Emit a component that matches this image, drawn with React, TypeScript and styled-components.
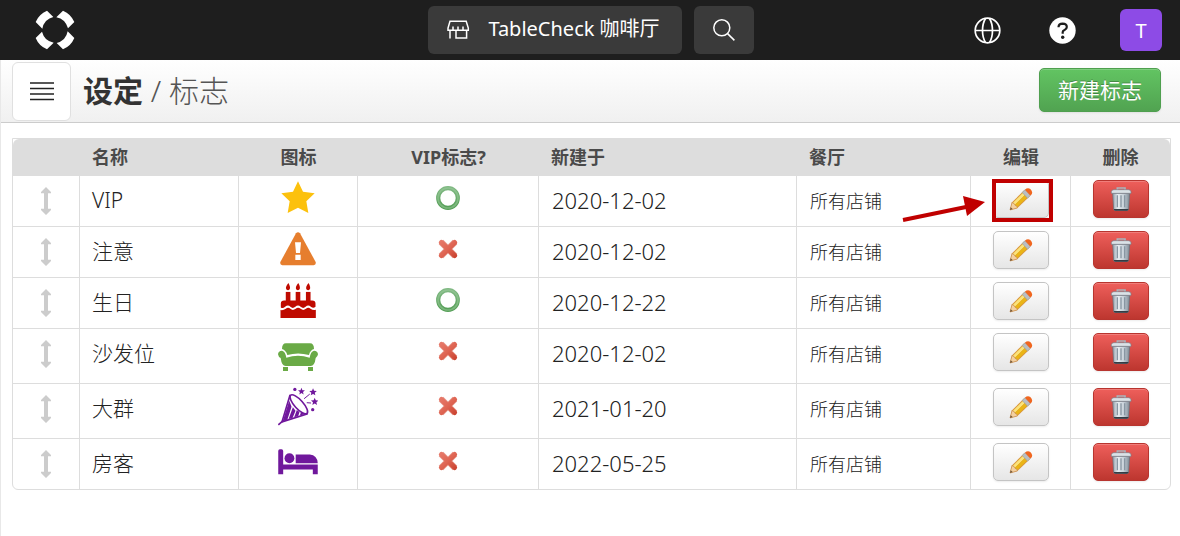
import React from 'react';
import styled, { createGlobalStyle, css } from 'styled-components';

const GlobalStyle = createGlobalStyle`
  *, *::before, *::after { box-sizing: border-box; }
  body {
    margin: 0;
    background: #fff;
    color: #222;
    font-family: "Noto Sans", "Noto Sans CJK SC", sans-serif;
    font-weight: 300;
  }
  button { font: inherit; color: inherit; cursor: pointer; margin: 0; }
  svg { display: block; flex: none; }
`;

const TopBar = styled.header`
  display: grid;
  grid-template-columns: 1fr auto 1fr;
  align-items: center;
  height: 60px;
  padding: 0 18px 0 20px;
  background: #1e1e1e;
  color: #fff;
`;

const LogoLink = styled.a`
  justify-self: start;
  margin-left: 15px;
`;

const BarGroup = styled.div`
  display: flex;
  gap: 12px;
`;

const BarButton = styled.button`
  display: flex;
  align-items: center;
  justify-content: center;
  gap: 18px;
  height: 48px;
  padding: 0 18px;
  border: 0;
  border-radius: 6px;
  background: #3a3a3a;
  color: #fff;
  font-size: 20px;
  font-weight: 400;
  line-height: 26px;
  white-space: nowrap;
`;

const ShopName = styled.span`
  padding: 0 4px 2px 0;
`;

const UserTools = styled.div`
  display: flex;
  align-items: center;
  justify-content: flex-end;
`;

const PlainButton = styled.button`
  display: flex;
  padding: 0;
  border: 0;
  background: none;
  margin-right: 48px;
  & + & { margin-right: 44px; }
`;

const Avatar = styled.button`
  width: 42px;
  height: 42px;
  padding: 0;
  border: 0;
  border-radius: 6px;
  background: #8d4be6;
  color: #fff;
  font-size: 20px;
  font-weight: 400;
`;

const PageBody = styled.div`
  border-left: 1px solid #e8e8e8;
  min-height: calc(100vh - 60px);
`;

const PageHeader = styled.div`
  display: flex;
  align-items: center;
  height: 63px;
  padding: 0 19px 0 11px;
  background: linear-gradient(#fff, #f0f0f0);
  border-bottom: 1px solid #ccc;
`;

const MenuButton = styled.button`
  display: flex;
  align-items: center;
  justify-content: center;
  width: 59px;
  height: 59px;
  padding: 0;
  border: 1px solid #e0e0e0;
  border-radius: 6px;
  background: #fff;
`;

const Title = styled.h1`
  flex: 1;
  margin: 0 0 0 12px;
  font-size: 30px;
  line-height: 44px;
  font-weight: 700;
  color: #333;
`;

const TitleSection = styled.span`
  font-weight: 300;
  color: #555;
`;

const CreateButton = styled.button`
  height: 44px;
  margin-bottom: 2px;
  padding: 0 18px;
  border: 1px solid #4f9f4f;
  border-radius: 5px;
  background: linear-gradient(#62c462, #51a351);
  box-shadow: inset 0 1px 0 rgba(255, 255, 255, 0.2), 0 1px 2px rgba(0, 0, 0, 0.08);
  color: #fff;
  font-size: 21px;
  font-weight: 400;
  line-height: 24px;
  text-shadow: 0 -1px 0 rgba(0, 0, 0, 0.25);
`;

const TableArea = styled.main`
  padding: 15px 9px 16px 11px;
`;

const FlagTable = styled.table`
  width: 100%;
  table-layout: fixed;
  border-collapse: separate;
  border-spacing: 0;
  border: 1px solid #ddd;
  border-radius: 0 0 6px 6px;
`;

const Col = styled.col<{ $w: number }>`
  width: ${(p) => p.$w}px;
`;

type Align = 'left' | 'center';

const HeadCell = styled.th<{ $align?: Align }>`
  height: 37px;
  padding: 0 12px 2px;
  background: #ddd;
  color: #4a4a4a;
  font-size: 18px;
  line-height: 24px;
  font-weight: 700;
  text-align: ${(p) => p.$align ?? 'center'};
  &:first-child { border-top-left-radius: 6px; }
  &:last-child { border-top-right-radius: 6px; }
`;

const Row = styled.tr<{ $tall?: boolean }>`
  height: ${(p) => (p.$tall ? 55 : 51)}px;
  &:last-child { height: 50px; }
`;

const Cell = styled.td`
  padding: 0 12px;
  border-right: 1px solid #ddd;
  border-bottom: 1px solid #ddd;
  vertical-align: top;
  font-size: 21px;
  line-height: 48px;
  &:last-child { border-right: 0; }
  ${Row}:last-child & { border-bottom: 0; }
`;

const DateCell = styled(Cell)`
  padding-left: 13px;
  font-size: 22px;
`;

const ShopCell = styled(Cell)`
  padding-left: 13px;
  font-size: 18px;
  line-height: 50px;
`;

const CenterBox = styled.div<{ $h: number }>`
  display: flex;
  align-items: center;
  justify-content: center;
  height: ${(p) => p.$h}px;
`;

const ActionCell = styled(Cell)`
  padding: 4px 0 0 22px;
`;

const ActionSlot = styled.div`
  position: relative;
  width: 56px;
  height: 38px;
`;

const Handle = styled.button`
  display: flex;
  padding: 0;
  border: 0;
  background: none;
  cursor: grab;
`;

const ActionButton = styled.button<{ $danger?: boolean }>`
  display: flex;
  align-items: center;
  justify-content: center;
  width: 56px;
  height: 38px;
  padding: 0;
  border-radius: 5px;
  ${(p) =>
    p.$danger
      ? css`
          border: 1px solid #b8352f;
          background: linear-gradient(#ee5f5b, #bd362f);
        `
      : css`
          border: 1px solid #c4c4c4;
          background: linear-gradient(#fff, #e6e6e6);
        `}
  box-shadow: inset 0 1px 0 rgba(255, 255, 255, 0.2), 0 1px 2px rgba(0, 0, 0, 0.08);
`;

const Highlight = styled.span`
  position: absolute;
  inset: -1px -4px -4px -1px;
  border: 4px solid #c00000;
  pointer-events: none;
`;

const Pointer = styled.svg`
  position: absolute;
  right: calc(100% + 7px);
  top: 15px;
  pointer-events: none;
`;

const Logo = () => (
  <svg width="40" height="40" viewBox="106 31 120 120" role="img" aria-label="TableCheck">
    <g fill="#fff">
      {[0, 90, 180, 270].map((a) => (
        <path key={a} transform={`rotate(${a} 166 91)`} d="M190 33 Q214 43 224 67 L205 86 Q202 74 193 64 Q183 55 170 53 Z" />
      ))}
    </g>
  </svg>
);

const ShopIcon = () => (
  <svg width="24" height="22" viewBox="0 0 24 22" fill="none" stroke="#fff" strokeWidth="1.5">
    <path d="M4 2.2H20.2L22.3 9V11.3H2V9Z" />
    <path d="M7 7.5V11M12 7.5V11M17 7.5V11M4 11.5V19.6M10 12V18.9H20.6V11.5" />
  </svg>
);

const SearchIcon = () => (
  <svg width="24" height="24" viewBox="0 0 24 24" fill="none" stroke="#fff" strokeWidth="1.5">
    <circle cx="9.8" cy="9.8" r="8" />
    <path d="M15.6 15.6L22.4 22.4" />
  </svg>
);

const GlobeIcon = () => (
  <svg width="27" height="27" viewBox="0 0 27 27" fill="none" stroke="#fff" strokeWidth="1.7">
    <circle cx="13.5" cy="13.5" r="12.3" />
    <path d="M1 13.5H26M11.5 1.5C7.5 8 7.5 19 11.5 25.5M15.5 1.5C19.5 8 19.5 19 15.5 25.5" />
  </svg>
);

const HelpIcon = () => (
  <svg width="27" height="27" viewBox="0 0 27 27">
    <circle cx="13.5" cy="13.5" r="13.2" fill="#fff" />
    <path d="M9.6 10.2V9.4Q9.8 6.6 13.6 6.6Q17.8 6.7 17.8 10Q17.8 12 15.6 12.9Q13.7 13.7 13.7 15V16.8" fill="none" stroke="#1e1e1e" strokeWidth="2.2" />
    <circle cx="13.7" cy="20.3" r="1.7" fill="#1e1e1e" />
  </svg>
);

const MenuIcon = () => (
  <svg width="24" height="20" viewBox="0 0 24 20" stroke="#222" strokeWidth="1.7">
    <path d="M0 2H24M0 7.5H24M0 13H24M0 18.5H24" />
  </svg>
);

const MoveIcon = () => (
  <svg width="12" height="28" viewBox="0 0 12 28" fill="#ccc">
    <path d="M6 0L11 5V6.2H8V21.8H11V23L6 28L1 23V21.8H4V6.2H1V5Z" />
  </svg>
);

const StarIcon = () => (
  <svg width="34" height="34" viewBox="63 153 102 102" fill="#fcc10d">
    <path d="M114 154L129 185L164 190L139 214L145 249L114 233L83 249L89 214L64 190L99 185Z" />
  </svg>
);

const WarningIcon = () => (
  <svg width="36" height="34" viewBox="60 305 108 102">
    <path d="M108 309Q114 302 120 309L167 395Q169 404 161 405H67Q59 404 61 395Z" fill="#e67e2e" />
    <path d="M105 336H123L120 368H108ZM106 373H122V389H106Z" fill="#fff" />
  </svg>
);

const CakeIcon = () => (
  <svg width="36" height="35" viewBox="60 24 108 106" fill="#bf0a00">
    {[84, 114, 145].map((x) => (
      <g key={x}>
        <path d={`M${x + 1} 24Q${x + 9} 38 ${x + 4} 44Q${x} 48 ${x - 5} 44Q${x - 10} 37 ${x + 1} 24Z`} />
        <rect x={x - 7} y="51" width="14" height="28" />
      </g>
    ))}
    <path d="M62 96V86Q62 77 72 77H157Q167 77 167 86V96Q160 102 153 96Q145 89 137 96Q130 103 122 96Q114 89 106 96Q98 103 91 96Q84 89 75 96Q68 102 62 98Z" />
    <path d="M61 130V106Q69 108 77 102Q84 96 91 102Q98 109 107 102Q114 96 122 102Q130 109 138 102Q145 96 152 102Q160 108 168 105V130Z" />
  </svg>
);

const SofaIcon = () => (
  <svg width="40" height="39" viewBox="54 171 120 117" fill="#6aaa46">
    <path d="M66 222Q66 205 78 205H150Q162 205 162 222Q150 226 147 240Q114 231 82 240Q78 226 66 222Z" />
    <path d="M54 238Q55 227 66 227Q76 229 79 248Q114 236 149 248Q152 229 162 227Q173 227 174 238Q173 245 167 249Q164 273 152 273H77Q65 273 62 249Q55 246 54 238Z" />
    <path d="M69 276H84V288H69ZM144 276H159V288H144Z" />
  </svg>
);

const starPoints = (cx: number, cy: number, r: number) =>
  Array.from({ length: 10 }, (_, i) => {
    const a = (Math.PI * i) / 5 - Math.PI / 2;
    const q = i % 2 ? r * 0.45 : r;
    return `${cx + q * Math.cos(a)},${cy + q * Math.sin(a)}`;
  }).join(' ');

const PartyIcon = () => (
  <svg width="40" height="40" viewBox="54 20 121 120" fill="#70189c" stroke="#70189c">
    <path d="M55 137L68 126" strokeWidth="5" />
    <path d="M90 48L66 128L142 104Z" fill="#fff" strokeWidth="5" strokeLinejoin="round" />
    <path d="M88 64L68 126L82 122L95 82ZM99 84L86 119L98 116L107 94ZM111 92L103 114L115 111L119 98ZM124 98L120 109L138 104Z" stroke="none" />
    <ellipse cx="117" cy="75" rx="37" ry="13" transform="rotate(48 117 75)" fill="#fff" strokeWidth="5" />
    <path d="M133 58L150 44M141 70L154 71" strokeWidth="3" />
    <g stroke="none">
      <polygon points={starPoints(125, 36, 11)} />
      <polygon points={starPoints(160, 38, 12)} />
      <polygon points={starPoints(165, 67, 12)} />
      <circle cx="105" cy="30" r="5" />
      <circle cx="159" cy="91" r="5" />
    </g>
  </svg>
);

const BedIcon = () => (
  <svg width="40" height="27" viewBox="54 205 120 82" fill="#70189c">
    <path d="M54 214Q54 209 59 209H64Q69 209 69 214V255H174V285H159V270H69V285H54Z" />
    <circle cx="88" cy="236" r="15" />
    <path d="M107 225H150Q172 227 174 251H107Z" />
  </svg>
);

const CircleMark = () => (
  <svg width="24" height="24" viewBox="0 0 24 24" fill="none" role="img" aria-label="是">
    <defs>
      <linearGradient id="ring" x1="0" y1="0" x2="0" y2="1">
        <stop offset="0" stopColor="#7fb882" />
        <stop offset="1" stopColor="#559f57" />
      </linearGradient>
    </defs>
    <circle cx="12" cy="12" r="9.8" stroke="url(#ring)" strokeWidth="4.2" />
    <circle cx="12" cy="12" r="10" stroke="#a0cda0" strokeWidth="1.6" strokeOpacity="0.5" />
  </svg>
);

const CrossMark = () => (
  <svg width="22" height="22" viewBox="0 0 22 22" fill="none" role="img" aria-label="否">
    <defs>
      <linearGradient id="cross" x1="0" y1="0" x2="22" y2="22" gradientUnits="userSpaceOnUse">
        <stop offset="0" stopColor="#e98072" />
        <stop offset="0.5" stopColor="#df6654" />
        <stop offset="1" stopColor="#c23522" />
      </linearGradient>
    </defs>
    <path d="M4 4L18 18M18 4L4 18" stroke="#e79a8e" strokeWidth="6.4" />
    <path d="M4.4 4.4L17.6 17.6M17.6 4.4L4.4 17.6" stroke="url(#cross)" strokeWidth="5" strokeLinecap="round" />
  </svg>
);

const PencilIcon = () => (
  <svg width="24" height="24" viewBox="358 172 71 71">
    <path d="M361 240L367 217L404 181L421 198L383 234Z" fill="#d9963a" />
    <path d="M369 219L402 187L408 193L375 225Z" fill="#fbe37a" />
    <path d="M375 225L408 193L415 200L382 231Z" fill="#eab516" />
    <path d="M361 240L367 218L373 221L376 226L382 230L383 234Z" fill="#f3d0a0" stroke="#c68a4a" strokeWidth="2" />
    <path d="M361 240L363 232L369 237Z" fill="#70563c" />
    <path d="M397 188L405 180L422 196L413 205Z" fill="#b9bec2" stroke="#92979b" strokeWidth="1.5" />
    <path d="M405 180Q413 173 421 178Q430 186 424 195L421 197Z" fill="#f0661f" />
  </svg>
);

const TrashIcon = () => (
  <svg width="22" height="24" viewBox="659 171 66 72">
    <defs>
      <linearGradient id="can" x1="0" y1="0" x2="1" y2="0">
        <stop offset="0" stopColor="#8f9ba6" />
        <stop offset="0.3" stopColor="#e9eef2" />
        <stop offset="0.65" stopColor="#c6d0d8" />
        <stop offset="1" stopColor="#7d8994" />
      </linearGradient>
    </defs>
    <path d="M681 179V174H704V179" fill="none" stroke="#a9b4bc" strokeWidth="5" />
    <path d="M667 190H718L715 238Q714 242 709 242H676Q671 242 670 238Z" fill="url(#can)" stroke="#66717b" strokeWidth="2" />
    <path d="M681 196V232M692 196V232M703 196V232" stroke="#8896a2" strokeWidth="4" />
    <path d="M670 237H715Q714 242 709 242H676Q671 242 670 237Z" fill="#343c44" />
    <path d="M663 190V185Q664 179 671 179H714Q721 179 722 185V190Z" fill="#dbe2e7" stroke="#77828c" strokeWidth="2" />
  </svg>
);

interface Flag {
  name: string;
  icon: React.ReactElement;
  vip: boolean;
  created: string;
  tall?: boolean;
  highlighted?: boolean;
}

const flags: Flag[] = [
  { name: 'VIP', icon: <StarIcon />, vip: true, created: '2020-12-02', highlighted: true },
  { name: '注意', icon: <WarningIcon />, vip: false, created: '2020-12-02' },
  { name: '生日', icon: <CakeIcon />, vip: true, created: '2020-12-22' },
  { name: '沙发位', icon: <SofaIcon />, vip: false, created: '2020-12-02', tall: true },
  { name: '大群', icon: <PartyIcon />, vip: false, created: '2021-01-20', tall: true },
  { name: '房客', icon: <BedIcon />, vip: false, created: '2022-05-25' },
];

const columnWidths = [67, 159, 119, 181, 258, 174, 100, 99];

export default function App() {
  return (
    <>
      <GlobalStyle />
      <TopBar>
        <LogoLink href="#">
          <Logo />
        </LogoLink>
        <BarGroup>
          <BarButton type="button">
            <ShopIcon />
            <ShopName>TableCheck 咖啡厅</ShopName>
          </BarButton>
          <BarButton type="button" aria-label="搜索">
            <SearchIcon />
          </BarButton>
        </BarGroup>
        <UserTools>
          <PlainButton type="button" aria-label="语言">
            <GlobeIcon />
          </PlainButton>
          <PlainButton type="button" aria-label="帮助">
            <HelpIcon />
          </PlainButton>
          <Avatar type="button">T</Avatar>
        </UserTools>
      </TopBar>
      <PageBody>
        <PageHeader>
          <MenuButton type="button" aria-label="菜单">
            <MenuIcon />
          </MenuButton>
          <Title>
            设定<TitleSection> / 标志</TitleSection>
          </Title>
          <CreateButton type="button">新建标志</CreateButton>
        </PageHeader>
        <TableArea>
          <FlagTable>
            <colgroup>
              {columnWidths.map((w, i) => (
                <Col key={i} $w={w} />
              ))}
            </colgroup>
            <thead>
              <tr>
                <HeadCell />
                <HeadCell $align="left">名称</HeadCell>
                <HeadCell>图标</HeadCell>
                <HeadCell>VIP标志?</HeadCell>
                <HeadCell $align="left">新建于</HeadCell>
                <HeadCell $align="left">餐厅</HeadCell>
                <HeadCell>编辑</HeadCell>
                <HeadCell>删除</HeadCell>
              </tr>
            </thead>
            <tbody>
              {flags.map((flag) => (
                <Row key={flag.name} $tall={flag.tall}>
                  <Cell>
                    <CenterBox $h={50}>
                      <Handle type="button" aria-label="移动">
                        <MoveIcon />
                      </Handle>
                    </CenterBox>
                  </Cell>
                  <Cell>{flag.name}</Cell>
                  <Cell>
                    <CenterBox $h={44}>{flag.icon}</CenterBox>
                  </Cell>
                  <Cell>
                    <CenterBox $h={44}>{flag.vip ? <CircleMark /> : <CrossMark />}</CenterBox>
                  </Cell>
                  <DateCell>{flag.created}</DateCell>
                  <ShopCell>所有店铺</ShopCell>
                  <ActionCell>
                    <ActionSlot>
                      <ActionButton type="button" aria-label="编辑">
                        <PencilIcon />
                      </ActionButton>
                      {flag.highlighted && (
                        <>
                          <Highlight />
                          <Pointer width="84" height="28" viewBox="0 0 84 28">
                            <path d="M1 25L64 12" stroke="#c00000" strokeWidth="4" />
                            <path d="M61 1L83 7L65 21Z" fill="#c00000" />
                          </Pointer>
                        </>
                      )}
                    </ActionSlot>
                  </ActionCell>
                  <ActionCell>
                    <ActionSlot>
                      <ActionButton type="button" $danger aria-label="删除">
                        <TrashIcon />
                      </ActionButton>
                    </ActionSlot>
                  </ActionCell>
                </Row>
              ))}
            </tbody>
          </FlagTable>
        </TableArea>
      </PageBody>
    </>
  );
}
